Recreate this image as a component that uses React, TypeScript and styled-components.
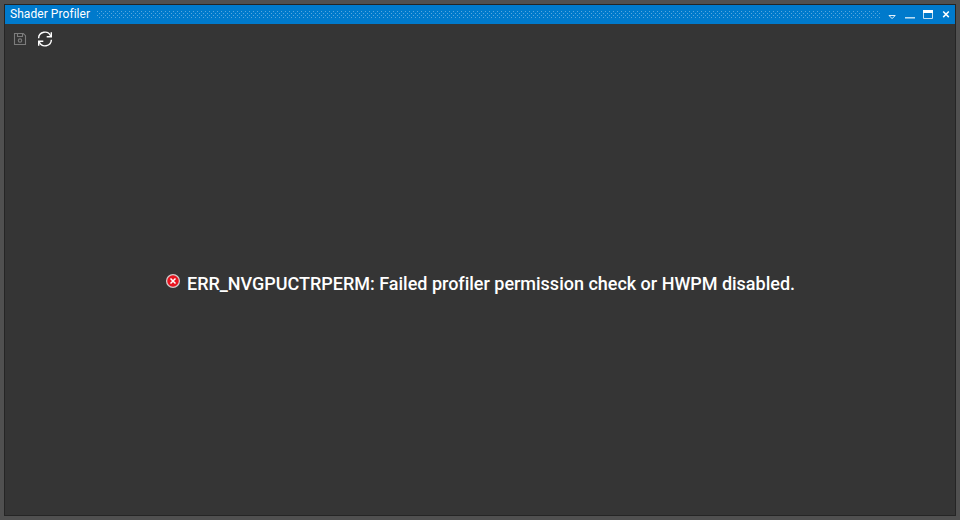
import React from "react";
import styled, { createGlobalStyle } from "styled-components";

const GlobalStyle = createGlobalStyle`
  html, body { margin: 0; padding: 0; background: #505050; }
  * { box-sizing: border-box; }
`;

const Frame = styled.div`
  width: 960px;
  height: 520px;
  padding: 4px;
  background: #505050;
  font-family: Roboto, "Liberation Sans", sans-serif;
`;

const Panel = styled.section`
  height: 100%;
  display: flex;
  flex-direction: column;
  border: 1px solid #252525;
  background: #353535;
`;

const TitleBar = styled.header`
  flex: none;
  height: 19px;
  display: flex;
  align-items: center;
  padding-left: 5px;
  background: #007acc;
  color: #fff;
`;

const Title = styled.span`
  flex: none;
  width: 87px;
  height: 19px;
  font-size: 12px;
  line-height: 18px;
  letter-spacing: 0.06px;
  white-space: nowrap;
`;

const Grip = styled.div`
  flex: none;
  width: 784px;
  height: 7px;
  background:
    conic-gradient(from 270deg at 1px 1px, #59a8de 90deg, transparent 0) 0 0 / 4px 4px,
    conic-gradient(from 270deg at 1px 1px, #59a8de 90deg, transparent 0) 2px 2px / 4px 4px;
`;

const WindowButtons = styled.div`
  display: flex;
  flex: none;
  margin-left: 2px;
`;

const WindowButton = styled.button`
  width: 18px;
  height: 19px;
  padding: 0;
  border: 0;
  background: transparent;
  svg { display: block; }
`;

const Toolbar = styled.div`
  flex: none;
  display: flex;
  height: 30px;
  padding: 7px;
  gap: 9px;
`;

const ToolButton = styled.button<{ $muted?: boolean }>`
  width: 16px;
  height: 16px;
  padding: 0;
  border: 0;
  background: transparent;
  color: ${(p) => (p.$muted ? "#7c7c7c" : "#fff")};
  svg { display: block; }
`;

const Content = styled.main`
  flex: 1;
  display: flex;
  justify-content: center;
  align-items: center;
  padding-bottom: 1px;
`;

const ErrorMessage = styled.div`
  display: flex;
  align-items: center;
  gap: 6px;
  color: #fff;
  font-size: 18px;
  font-weight: 500;
  line-height: 22px;
  letter-spacing: -0.01px;
  white-space: nowrap;
`;

const ErrorIcon = styled.svg`
  display: block;
  margin-bottom: 6px;
`;

export default function App() {
  return (
    <Frame>
      <GlobalStyle />
      <Panel>
        <TitleBar>
          <Title>Shader Profiler</Title>
          <Grip />
          <WindowButtons>
            <WindowButton aria-label="Menu">
              <svg width="18" height="19" fill="none" stroke="#fff" strokeWidth="0.9">
                <path d="M6 10.5h6.2L9.1 13.6z" />
              </svg>
            </WindowButton>
            <WindowButton aria-label="Minimize">
              <svg width="18" height="19">
                <path d="M4 12h10v1H4z" fill="#b8dcf3" />
                <path d="M4 13h10v1H4z" fill="#69b1e1" />
              </svg>
            </WindowButton>
            <WindowButton aria-label="Maximize">
              <svg width="18" height="19">
                <path d="M4 5h10v3H4z" fill="#fff" />
                <path d="M4.5 8v5.5h9V8" fill="none" stroke="#c5e1f4" />
              </svg>
            </WindowButton>
            <WindowButton aria-label="Close">
              <svg width="18" height="19">
                <path d="M6.2 6.5l5.6 5.6M11.8 6.5l-5.6 5.6" stroke="#fff" strokeWidth="1.5" />
              </svg>
            </WindowButton>
          </WindowButtons>
        </TitleBar>
        <Toolbar>
          <ToolButton $muted aria-label="Save" disabled>
            <svg width="16" height="16" fill="none" stroke="currentColor" strokeWidth="1.1">
              <path d="M2.5 2.5h8.8l2.2 2.2v8.8h-11zM5.5 2.5v3h5v-3" />
              <circle cx="8" cy="9.6" r="1.7" />
            </svg>
          </ToolButton>
          <ToolButton aria-label="Refresh">
            <svg width="16" height="16" fill="none" stroke="currentColor" strokeWidth="1.4">
              <path d="M1.6 7.2A6.3 6.3 0 0 1 13.7 5M14.4 8.8A6.3 6.3 0 0 1 2.3 11" />
              <path d="M14.3 1.2v4.5H9.7M1.7 14.8v-4.5h4.6" />
            </svg>
          </ToolButton>
        </Toolbar>
        <Content>
          <ErrorMessage>
            <ErrorIcon width="16" height="16">
              <circle cx="8" cy="8" r="6.4" fill="#e8141f" stroke="#d2cccc" strokeWidth="1.3" />
              <path d="M5.5 5.5l5 5M10.5 5.5l-5 5" stroke="#fff" strokeWidth="1.5" />
            </ErrorIcon>
            <span>ERR_NVGPUCTRPERM: Failed profiler permission check or HWPM disabled.</span>
          </ErrorMessage>
        </Content>
      </Panel>
    </Frame>
  );
}
